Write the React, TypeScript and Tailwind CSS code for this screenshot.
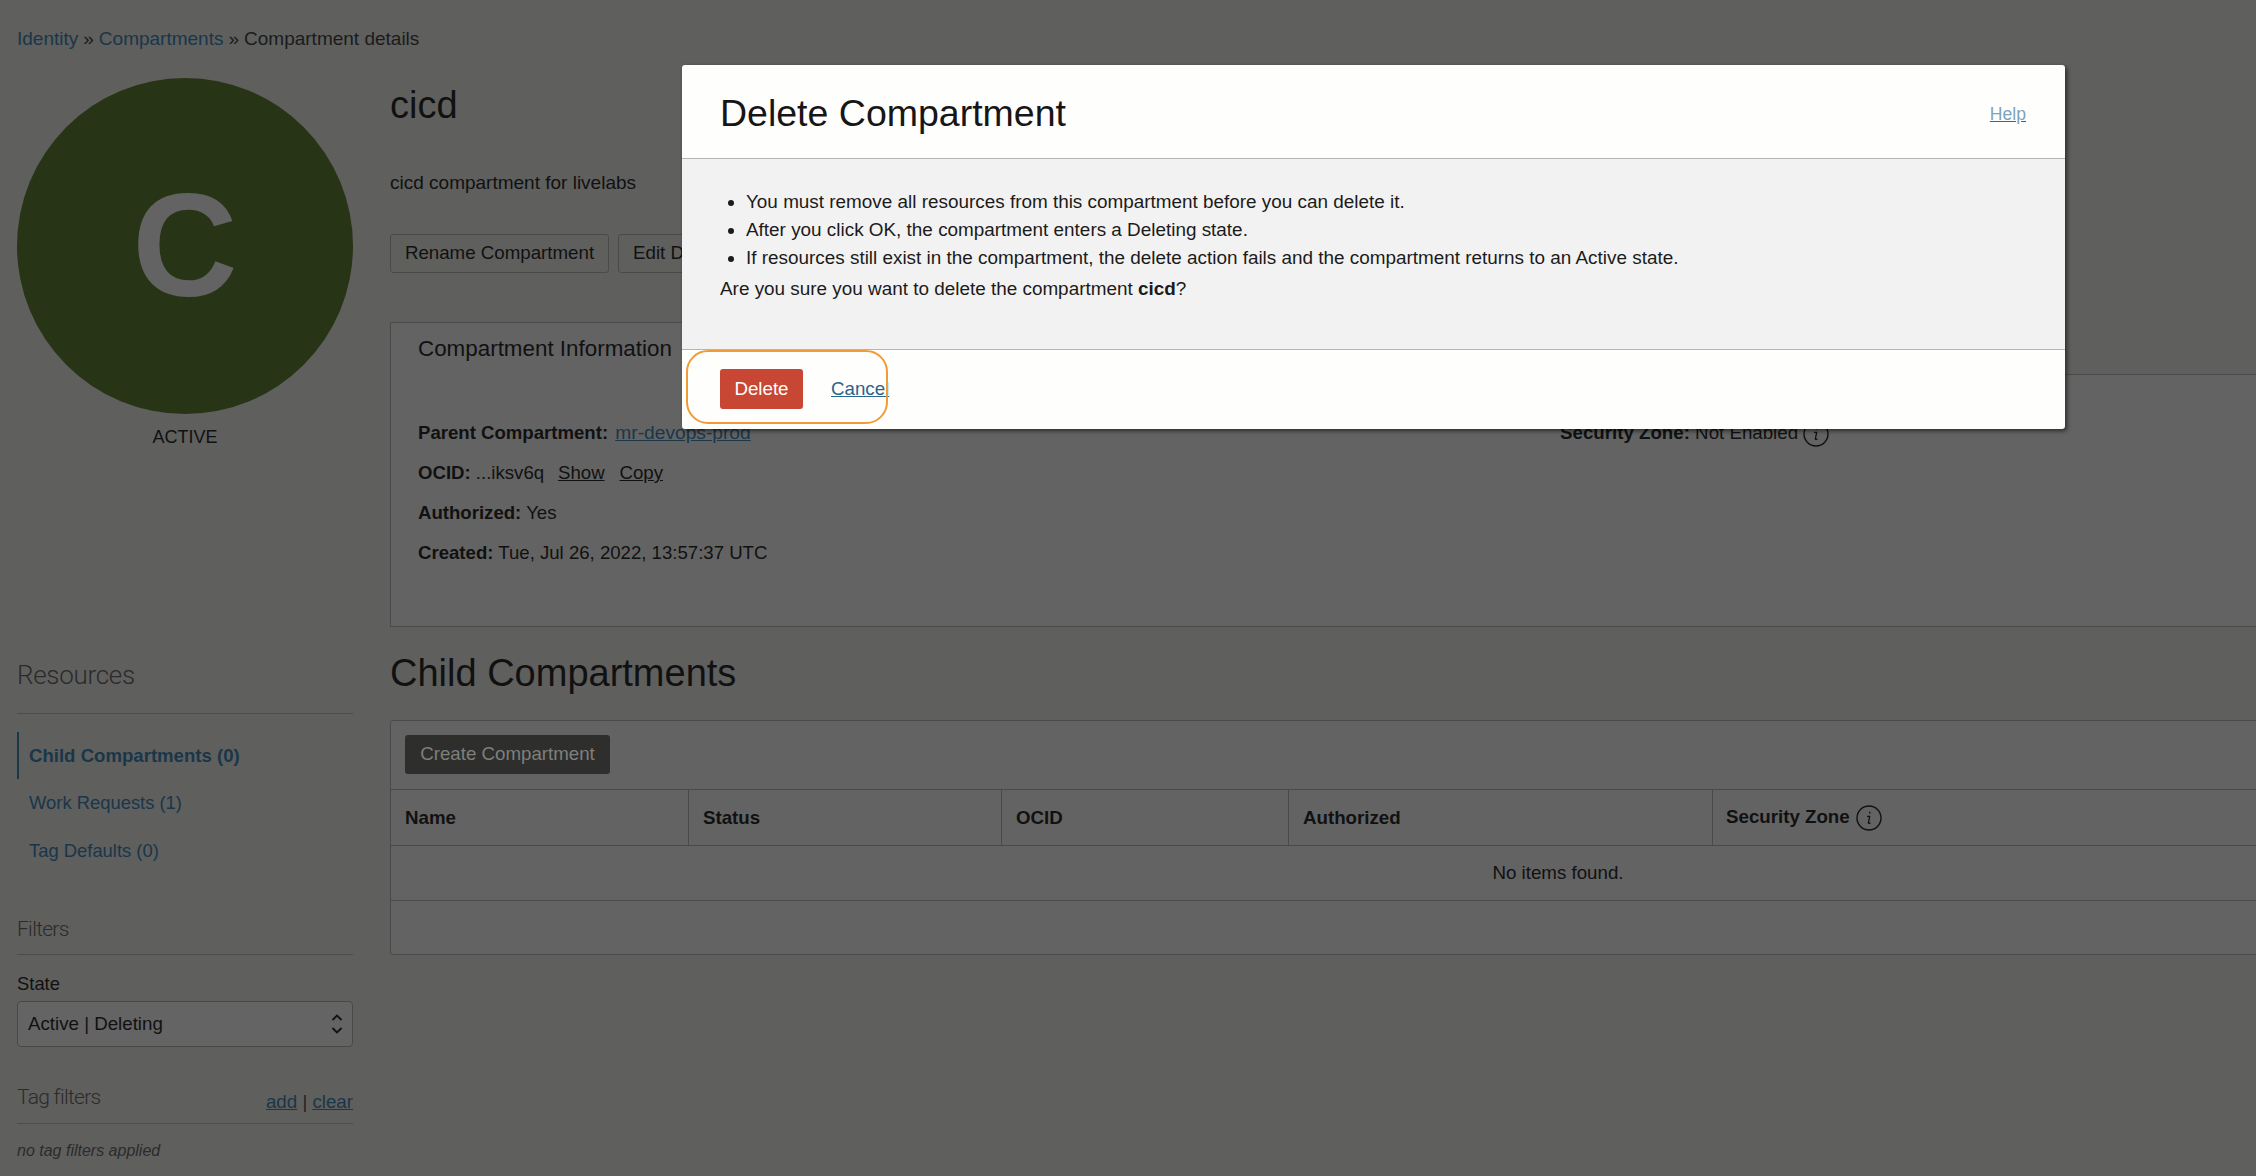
import React from "react";

const InfoIcon = ({ size = 26 }: { size?: number }) => (
  <svg width={size} height={size} viewBox="0 0 26 26" fill="none" className="shrink-0">
    <circle cx="13" cy="13" r="12" stroke="#111" strokeWidth="1.4" />
    <path d="M13.800 7.200v.9M11.600 11.400h2.100l-1.300 6.200c-.1.700.5 1 1.600.5" stroke="#111" strokeWidth="1.300" strokeLinecap="round" strokeLinejoin="round" />
  </svg>
);

const Field = ({ label, children }: { label: string; children: React.ReactNode }) => (
  <div className="h-[24px] leading-[24px] mb-[16px] whitespace-nowrap">
    <b className="font-bold">{label}</b> {children}
  </div>
);

export default function App() {
  return (
    <div className="relative w-[2256px] h-[1176px] overflow-hidden bg-[#5f5f5e] text-[#111] text-[18.72px] font-['Liberation_Sans',Arial,sans-serif]">
      <div className="pl-[17px] pt-[27px] h-[78px] text-[19px] leading-[24px] whitespace-nowrap text-[#1b1b1b] flex gap-[5px]">
        <span className="text-[#1a3649]">Identity</span>
        <span>»</span>
        <span className="text-[#1a3649]">Compartments</span>
        <span>»</span>
        <span>Compartment details</span>
      </div>

      <div className="flex pl-[17px]">
        {/* Sidebar */}
        <aside className="w-[336px] shrink-0">
          <div className="w-[336px] h-[336px] rounded-full bg-[#283416] flex items-center justify-center text-[#636363] text-[146px] font-bold leading-none">
            C
          </div>
          <div className="mt-[11px] text-center leading-[24px] text-[18px]">ACTIVE</div>

          <div className="mt-[210px] text-[26px] tracking-[-0.3px] leading-[32px] font-['Roboto',sans-serif] font-light text-[#2b2b2b] pb-[22px] border-b border-[#4c4c4c]">Resources</div>
          <nav className="mt-[18px] text-[18.4px] text-[#1a3649]">
            <div className="h-[47px] border-l-2 border-[#1a3649] pl-[10px] leading-[47px] font-bold text-[18.6px]">Child Compartments (0)</div>
            <div className="h-[48px] pl-[12px] leading-[48px]">Work Requests (1)</div>
            <div className="h-[48px] pl-[12px] leading-[48px]">Tag Defaults (0)</div>
          </nav>

          <div className="mt-[41px] text-[21px] tracking-[-0.7px] leading-[26px] font-['Roboto',sans-serif] font-light text-[#2b2b2b] pb-[12px] border-b border-[#4c4c4c]">Filters</div>
          <div className="mt-[17px] leading-[24px] text-[18.4px]">State</div>
          <div className="mt-[5px] h-[46px] border border-[#494949] rounded-[4px] bg-[#646464] flex items-center justify-between pl-[10px] pr-[8px]">
            <span>Active | Deleting</span>
            <svg width="14" height="24" viewBox="0 0 14 24" fill="none" stroke="#111" strokeWidth="1.8">
              <path d="M2.500 8 7 3.500 11.500 8M2.500 16 7 20.500 11.500 16" />
            </svg>
          </div>

          <div className="mt-[37px] pb-[13px] flex items-end justify-between border-b border-[#4c4c4c]">
            <span className="text-[21px] tracking-[-0.7px] leading-[26px] font-['Roboto',sans-serif] font-light text-[#2b2b2b]">Tag filters</span>
            <span className="text-[#222] leading-[20px] -mb-[2px]">
              <span className="underline text-[#1a3649]">add</span> | <span className="underline text-[#1a3649]">clear</span>
            </span>
          </div>
          <div className="mt-[17px] italic text-[16px] leading-[20px] text-[#2b2b2b]">no tag filters applied</div>
        </aside>

        {/* Main */}
        <main className="ml-[37px] w-[2336px] shrink-0">
          <h1 className="mt-[5px] text-[38px] leading-[44px] text-[#111]">cicd</h1>
          <p className="mt-[44px] leading-[24px] text-[19px]">cicd compartment for livelabs</p>
          <div className="mt-[39px] flex gap-[9px]">
            <button className="h-[39px] w-[219px] border border-[#4a4a4a] rounded-[3px] text-center">Rename Compartment</button>
            <button className="h-[39px] w-[200px] border border-[#4a4a4a] rounded-[3px] pl-[14px] text-left">Edit Details</button>
          </div>

          <div className="mt-[49px] w-[320px] h-[53px] -mb-px relative border border-b-0 border-[#4a4a4a] bg-[#636363] pl-[27px] pt-[13px] text-[22.4px] leading-[26px] whitespace-nowrap">
            Compartment Information
          </div>
          <section className="h-[253px] border border-[#4a4a4a] bg-[#636363] pl-[27px] pt-[46px] flex">
            <div className="w-[1142px] text-[18.6px]">
              <Field label="Parent Compartment:"><span className="underline text-[#1a3649] text-[19.2px] ml-[2px]">mr-devops-prod</span></Field>
              <Field label="OCID:">...iksv6q<span className="underline ml-[14px]">Show</span><span className="underline ml-[15px]">Copy</span></Field>
              <Field label="Authorized:">Yes</Field>
              <Field label="Created:">Tue, Jul 26, 2022, 13:57:37 UTC</Field>
            </div>
            <div className="flex items-start gap-[5px] h-[24px] leading-[24px] whitespace-nowrap">
              <span><b>Security Zone:</b> Not Enabled</span>
              <InfoIcon />
            </div>
          </section>

          <h2 className="mt-[24px] text-[38px] leading-[44px]">Child Compartments</h2>
          <section className="mt-[25px] border border-[#4a4a4a] rounded-tl-[3px] rounded-bl-[3px] bg-[#636363]">
            <div className="h-[69px] pl-[14px] pt-[14px] border-b border-[#4a4a4a]">
              <button className="h-[39px] w-[205px] rounded-[3px] bg-[#2e2e2c] text-[#7f7f7d]">Create Compartment</button>
            </div>
            <div className="flex h-[56px] border-b border-[#4a4a4a] font-bold">
              <div className="w-[298px] pl-[14px] leading-[56px] border-r border-[#4a4a4a]">Name</div>
              <div className="w-[313px] pl-[14px] leading-[56px] border-r border-[#4a4a4a]">Status</div>
              <div className="w-[287px] pl-[14px] leading-[56px] border-r border-[#4a4a4a]">OCID</div>
              <div className="w-[424px] pl-[14px] leading-[56px] border-r border-[#4a4a4a]">Authorized</div>
              <div className="flex-1 pl-[13px] flex items-center gap-[6px] whitespace-nowrap">Security Zone <InfoIcon /></div>
            </div>
            <div className="h-[55px] border-b border-[#4a4a4a] text-center leading-[54px]">No items found.</div>
            <div className="h-[53px]" />
          </section>
        </main>
      </div>

      {/* Dialog */}
      <div className="absolute left-[682px] top-[65px] w-[1383px] h-[364px] bg-[#fefefd] rounded-[3px] shadow-[2px_2px_4px_rgba(0,0,0,0.55)] flex flex-col">
        <header className="h-[94px] shrink-0 border-b border-[#b5b5b3] flex items-center justify-between pl-[38px] pr-[39px] pt-[2px]">
          <span className="text-[37.5px] leading-[44px] text-[#161616]">Delete Compartment</span>
          <span className="mt-[3px] text-[17.6px] underline text-[#7ea4bb] decoration-[#2d6a8f]">Help</span>
        </header>
        <div className="h-[191px] shrink-0 bg-[#f3f2f2] border-b border-[#b5b5b3] pl-[38px] pt-[29px] text-[18.9px] text-[#1b1b1b]">
          <ul className="list-disc pl-[26px] leading-[28px]">
            <li>You must remove all resources from this compartment before you can delete it.</li>
            <li>After you click OK, the compartment enters a Deleting state.</li>
            <li>If resources still exist in the compartment, the delete action fails and the compartment returns to an Active state.</li>
          </ul>
          <p className="mt-[3px] leading-[28px]">Are you sure you want to delete the compartment <b>cicd</b>?</p>
        </div>
        <footer className="flex-1 flex items-start pl-[38px] pt-[19px]">
          <button className="h-[40px] w-[83px] rounded-[3px] bg-[#c74634] text-[#fdfdfd]">Delete</button>
          <span className="ml-[28px] mt-[8px] leading-[24px] underline text-[#27658c]">Cancel</span>
        </footer>
      </div>

      {/* Highlight callout */}
      <div className="absolute left-[686px] top-[350px] w-[202px] h-[74px] rounded-[22px] border-2 border-[#f29a36]" />
    </div>
  );
}
